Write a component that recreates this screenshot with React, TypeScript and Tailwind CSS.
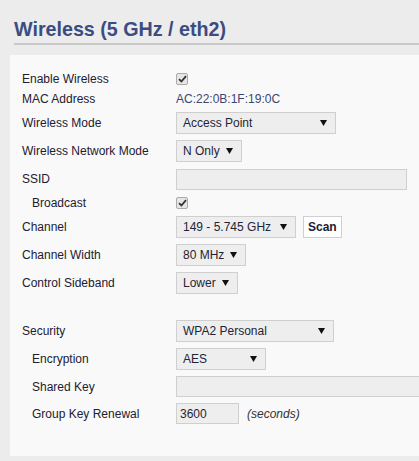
import React from "react";

const font = { fontFamily: '"Liberation Sans", Arial, sans-serif' };

function Check() {
  return (
    <div className="w-[12px] h-[12px] border border-[#ababab] bg-[#e6e6e6] rounded-[2px] flex items-center justify-center">
      <svg width="9" height="8" viewBox="0 0 9 8">
        <path d="M1 4.2 L3.4 6.5 L8 1.2" stroke="#333" strokeWidth="1.8" fill="none" />
      </svg>
    </div>
  );
}

function Select({ value, w }: { value: string; w: string }) {
  return (
    <div className={`${w} h-[22px] border border-[#cfcfcf] bg-[#eeeeee] flex items-center justify-between pl-[6px] pr-[8px] text-[12px] text-[#1f2435]`}>
      <span>{value}</span>
      <svg width="7" height="6" viewBox="0 0 7 6">
        <path d="M0 0 H7 L3.5 6 Z" fill="#111" />
      </svg>
    </div>
  );
}

function Input({ w, value }: { w: string; value?: string }) {
  return (
    <div className={`${w} h-[21px] border border-[#cfcfcf] bg-[#eeeeee] flex items-center pl-[3px] text-[12px] text-[#1f2435]`}>
      {value}
    </div>
  );
}

function Row({
  label,
  h,
  indent,
  children,
}: {
  label: string;
  h: string;
  indent?: boolean;
  children?: React.ReactNode;
}) {
  return (
    <div className={`flex items-center ${h}`}>
      <div className={`w-[166px] shrink-0 text-[12px] text-[#1c2030] ${indent ? "pl-[22px]" : "pl-[12px]"}`}>
        {label}
      </div>
      <div className="flex items-center gap-[7px] min-w-0">{children}</div>
    </div>
  );
}

export default function App() {
  return (
    <div className="w-[419px] h-[461px] bg-[#ececec] overflow-hidden" style={font}>
      <div className="pl-[14px] pt-[18px]">
        <h1 className="text-[19.7px] font-bold text-[#3b4d80] leading-[22px] whitespace-nowrap">Wireless (5 GHz / eth2)</h1>
        <div className="mt-[3px] h-[2px] bg-[#c9c9c9]" />
      </div>
      <div className="ml-[10px] mt-[10px] w-[420px] h-[401px] bg-[#f9f9f9] pt-[13px] overflow-hidden">
        <Row label="Enable Wireless" h="h-[21px]">
          <Check />
        </Row>
        <Row label="MAC Address" h="h-[20px]">
          <span className="text-[12px] text-[#3a4770]">AC:22:0B:1F:19:0C</span>
        </Row>
        <Row label="Wireless Mode" h="h-[28px]">
          <Select value="Access Point" w="w-[160px]" />
        </Row>
        <Row label="Wireless Network Mode" h="h-[28px]">
          <Select value="N Only" w="w-[66px]" />
        </Row>
        <Row label="SSID" h="h-[28px]">
          <Input w="w-[231px]" />
        </Row>
        <Row label="Broadcast" h="h-[20px]" indent>
          <Check />
        </Row>
        <Row label="Channel" h="h-[28px]">
          <Select value="149 - 5.745 GHz" w="w-[120px]" />
          <div className="h-[22px] px-[4px] border border-[#cfcfcf] bg-white flex items-center text-[12px] font-bold text-[#1c2030]">
            Scan
          </div>
        </Row>
        <Row label="Channel Width" h="h-[28px]">
          <Select value="80 MHz" w="w-[70px]" />
        </Row>
        <Row label="Control Sideband" h="h-[28px]">
          <Select value="Lower" w="w-[62px]" />
        </Row>
        <div className="h-[20px]" />
        <Row label="Security" h="h-[28px]">
          <Select value="WPA2 Personal" w="w-[158px]" />
        </Row>
        <Row label="Encryption" h="h-[28px]" indent>
          <Select value="AES" w="w-[90px]" />
        </Row>
        <Row label="Shared Key" h="h-[27px]" indent>
          <Input w="w-[260px]" />
        </Row>
        <Row label="Group Key Renewal" h="h-[27px]" indent>
          <Input w="w-[63px]" value="3600" />
          <span className="text-[12px] italic text-[#333] ml-[1px]">(seconds)</span>
        </Row>
      </div>
    </div>
  );
}
